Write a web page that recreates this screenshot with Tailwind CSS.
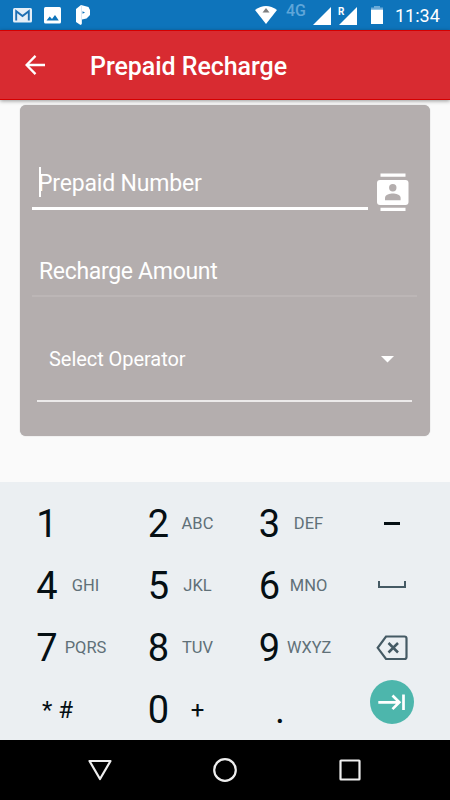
<!DOCTYPE html>
<html lang="en">
<head>
    <meta charset="UTF-8">
    <meta name="viewport" content="width=device-width, initial-scale=1.0">
    <title>Prepaid Recharge</title>
    <script src="https://cdn.jsdelivr.net/npm/@tailwindcss/browser@4"></script>
    <style>
        body {
            font-family: 'Roboto', sans-serif;
        }
    </style>
</head>
<body class="bg-[#fafafa]">
    <div class="w-[450px] h-[800px] flex flex-col overflow-hidden">
        <!-- Status bar -->
        <div class="h-[30px] shrink-0 bg-[#0e74bb] flex items-center justify-between pl-[13px] pr-[9px] text-white">
            <div class="flex items-center">
                <svg class="w-[19px] h-[15px]" viewBox="0 0 19 15">
                    <rect width="19" height="14.5" rx="1.5" fill="#e4eef7"/>
                    <path d="M3.2 12.5V3.2L9.5 8l6.3-4.8v9.3" fill="none" stroke="#1e6fb3" stroke-width="1.9"/>
                </svg>
                <svg class="w-[17px] h-[17px] ml-3" viewBox="0 0 17 17">
                    <rect width="17" height="16.5" rx="1.5" fill="#fff"/>
                    <path d="M2.5 13.5l3.2-4 2.3 2.6 3-4 3.8 5.4z" fill="#0e74bb"/>
                </svg>
                <svg class="w-[15px] h-[20px] ml-[15px]" viewBox="0 0 15 20">
                    <path d="M0 4L5 0L12.5 2L14 5V10L10.5 13.5L6 14.5V18.5L4.500 20L0 17Z" fill="#fff"/>
                    <path d="M5.500 0.500V19.500" stroke="#c2d9ea" stroke-width=".6"/>
                    <path d="M6.500 6.200L9 7.400L6.500 8.800Z" fill="#0e74bb"/>
                </svg>
            </div>
            <div class="flex items-center">
                <svg class="w-[22px] h-[18px]" viewBox="0 0 22 18">
                    <path d="M0 4Q11-4 22 4L11 18z" fill="#fff"/>
                    <path d="M7.5 6.5L11 2l3.500 4.500z" fill="#7f7f7f"/>
                </svg>
                <span class="w-[22px] ml-[9px] -mt-[8px] text-[16px] leading-5 font-medium text-[#5fa6d9]">4G</span>
                <svg class="w-[18px] h-[18px] ml-[5px] mt-[2px]" viewBox="0 0 18 18"><path d="M18 0v18H0z" fill="#fff"/></svg>
                <div class="relative ml-[8px] mt-[2px]">
                    <svg class="w-[18px] h-[18px]" viewBox="0 0 18 18"><path d="M18 0v18H0z" fill="#fff"/></svg>
                    <span class="absolute -left-px -top-px text-[10px] leading-[11px] font-bold">R</span>
                </div>
                <svg class="w-[12px] h-[18px] ml-[14px]" viewBox="0 0 12 18">
                    <rect x="3" width="6" height="2" fill="#6aaad8"/>
                    <rect y="1.5" width="12" height="3" fill="#6aaad8"/>
                    <rect y="3.7" width="12" height="14.3" fill="#fff"/>
                </svg>
                <span class="w-[46px] ml-[12px] mt-[2px] text-[18px] leading-5">11:34</span>
            </div>
        </div>

        <!-- App bar -->
        <header class="relative h-[70px] shrink-0 bg-[#d82b31] border-y border-[#d50000] shadow-[0_1px_4px_rgba(0,0,0,0.4)] flex items-center pl-[25px]">
            <svg class="w-5 h-5" viewBox="0 0 20 20" fill="none" stroke="#fff" stroke-width="2.3">
                <path d="M20 10H2M10.5 0.9L1.5 10l9 9.1"/>
            </svg>
            <h1 class="ml-[45px] mt-[3px] text-[25px] leading-8 tracking-[-0.05px] font-medium text-white">Prepaid Recharge</h1>
        </header>

        <!-- Recharge form -->
        <main class="h-[382px] shrink-0 px-5 pt-[5px]">
            <section class="h-[331px] rounded-md bg-[#b4aeae] shadow-[0_0_1px_rgba(0,0,0,0.35)] text-white">
                <div class="flex pt-[62px] pl-[12px]">
                    <div class="w-[336px] h-[43px] border-b-3 border-white flex items-start pl-[7px]">
                        <span class="w-[2px] h-[30px] bg-white"></span>
                        <span class="-ml-[3px] text-[23px] leading-[34px] tracking-[-0.18px]">Prepaid Number</span>
                    </div>
                    <svg class="w-[32px] h-[38px] ml-[9px] mt-[6px]" viewBox="0 0 32 38">
                        <path d="M3.5 0.5h25v3.3h-25zM3.5 34.8h25v3.2h-25z" fill="#fff"/>
                        <rect y="7" width="31.5" height="25" rx="3" fill="#fff"/>
                        <circle cx="15.8" cy="14.8" r="3.7" fill="#b4aeae"/>
                        <path d="M8 27.3v-2.5c0-3 5-4.3 7.8-4.3s7.8 1.3 7.8 4.3v2.5z" fill="#b4aeae"/>
                    </svg>
                </div>
                <div class="w-[385px] h-[42px] ml-[12px] mt-[44px] pl-[7px] border-b-2 border-white/10 text-[23px] leading-[34px] tracking-[-0.32px]">Recharge Amount</div>
                <div class="w-[375px] h-[65px] ml-[17px] mt-[40px] pl-[12px] pr-[18px] border-b-2 border-[#eceaea] flex items-start justify-between">
                    <span class="mt-[8px] text-[20px] leading-7 tracking-[-0.05px]">Select Operator</span>
                    <svg class="w-[13px] h-[7px] mt-[19px]" viewBox="0 0 13 7"><path d="M0 0h13L6.5 6.5z" fill="#fff"/></svg>
                </div>
            </section>
        </main>

        <!-- Numeric keyboard -->
        <div class="h-[258px] shrink-0 bg-[#ebeff2] pt-[11px] grid grid-cols-[111px_111px_111px_117px] auto-rows-[62px] text-[38px] leading-[62px] text-center text-[#050f14]">
            <div class="flex pl-[30px]"><span class="w-[34px]">1</span></div>
            <div class="flex pl-[30px]"><span class="w-[35px]">2</span><span class="w-[43px] text-[16.5px] text-[#607078]">ABC</span></div>
            <div class="flex pl-[30px]"><span class="w-[35px]">3</span><span class="w-[43px] text-[16.5px] text-[#607078]">DEF</span></div>
            <div class="flex justify-center pt-[29px]"><span class="w-4 h-[3px] bg-[#050f14]"></span></div>

            <div class="flex pl-[30px]"><span class="w-[34px]">4</span><span class="w-[43px] text-[16.5px] text-[#607078]">GHI</span></div>
            <div class="flex pl-[30px]"><span class="w-[35px]">5</span><span class="w-[43px] text-[16.5px] text-[#607078]">JKL</span></div>
            <div class="flex pl-[30px]"><span class="w-[35px]">6</span><span class="w-[43px] text-[16.5px] text-[#607078]">MNO</span></div>
            <div class="flex justify-center pt-[26px]"><span class="w-7 h-[7px] border-2 border-t-0 border-[#455a64]"></span></div>

            <div class="flex pl-[30px]"><span class="w-[34px]">7</span><span class="w-[43px] text-[16.5px] text-[#607078]">PQRS</span></div>
            <div class="flex pl-[30px]"><span class="w-[35px]">8</span><span class="w-[43px] text-[16.5px] text-[#607078]">TUV</span></div>
            <div class="flex pl-[30px]"><span class="w-[35px]">9</span><span class="w-[43px] text-[16.3px] text-[#607078]">WXYZ</span></div>
            <div class="flex justify-center items-center">
                <svg class="w-8 h-[26px]" viewBox="0 0 32 26" fill="none" stroke="#455a64" stroke-width="2.2">
                    <path d="M10 1.5h18.5a2 2 0 0 1 2 2v18.5a2 2 0 0 1-2 2H10L1.7 12.8z"/>
                    <path d="M12.5 8l9.5 9.5M22 8l-9.5 9.5" stroke-width="2.5"/>
                </svg>
            </div>

            <div class="pl-[42px] text-left text-[24px]">* #</div>
            <div class="flex pl-[30px]"><span class="w-[35px]">0</span><span class="w-[43px] text-[24px]">+</span></div>
            <div class="flex pl-[36px]"><span class="w-[44px]">.</span></div>
            <div class="flex justify-center items-start">
                <svg class="w-11 h-11 mt-px" viewBox="0 0 44 44" fill="none" stroke="#fff" stroke-width="2.7">
                    <circle cx="22" cy="22" r="22" fill="#4db6ac" stroke="none"/>
                    <path d="M8.3 22.3h20.5M22.5 15.5l6.8 6.8-6.8 6.8M33.5 14.5v15.5"/>
                </svg>
            </div>
        </div>

        <!-- Navigation bar -->
        <nav class="h-[60px] shrink-0 bg-black flex items-center pl-[88px] gap-[101px]">
            <svg class="w-[24px] h-[22px]" viewBox="0 0 24 22" fill="none" stroke="#eee" stroke-width="2.2" stroke-linejoin="round"><path d="M1.5 2h21L12 20z"/></svg>
            <svg class="w-6 h-6" viewBox="0 0 24 24" fill="none" stroke="#eee" stroke-width="2.2"><circle cx="12" cy="12" r="10.8"/></svg>
            <svg class="w-6 h-6" viewBox="0 0 24 24" fill="none" stroke="#eee" stroke-width="2.2"><rect x="2.5" y="2.5" width="19" height="19" rx=".5"/></svg>
        </nav>
    </div>
</body>
</html>
